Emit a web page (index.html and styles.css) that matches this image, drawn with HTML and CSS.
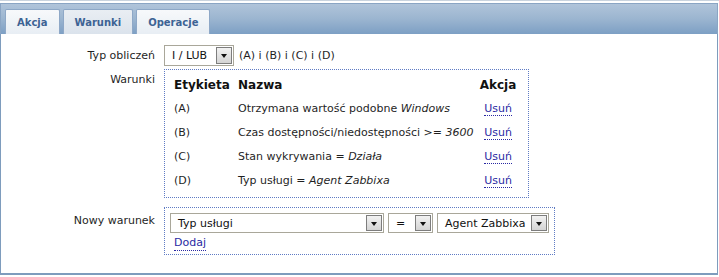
FILE: index.html
```html
<!DOCTYPE html>
<html lang="pl">
<head>
    <meta charset="UTF-8">
    <meta name="viewport" content="width=device-width, initial-scale=1.0">
    <title>Akcja - Warunki</title>
    <link rel="stylesheet" href="styles.css">
</head>
<body>
    <div class="tab-panel">
        <div class="tab-bar">
            <div class="tab">Akcja</div>
            <div class="tab active">Warunki</div>
            <div class="tab">Operacje</div>
        </div>
        <div class="tab-body">
            <div class="form-grid">
                <div class="form-label">Typ obliczeń</div>
                <div class="form-field inline">
                    <div class="select w-calc">
                        <span class="select-text">I / LUB</span>
                        <span class="select-btn"></span>
                    </div>
                    <span class="formula">(A) i (B) i (C) i (D)</span>
                </div>

                <div class="form-label top">Warunki</div>
                <div class="form-field">
                    <div class="dotted-box conditions">
                        <table class="cond-table">
                            <thead>
                                <tr>
                                    <th class="col-label">Etykieta</th>
                                    <th>Nazwa</th>
                                    <th class="col-action">Akcja</th>
                                </tr>
                            </thead>
                            <tbody>
                                <tr>
                                    <td>(A)</td>
                                    <td>Otrzymana wartość podobne <em>Windows</em></td>
                                    <td class="col-action"><a href="#" class="link">Usuń</a></td>
                                </tr>
                                <tr>
                                    <td>(B)</td>
                                    <td>Czas dostępności/niedostępności &gt;= <em>3600</em></td>
                                    <td class="col-action"><a href="#" class="link">Usuń</a></td>
                                </tr>
                                <tr>
                                    <td>(C)</td>
                                    <td>Stan wykrywania = <em>Działa</em></td>
                                    <td class="col-action"><a href="#" class="link">Usuń</a></td>
                                </tr>
                                <tr>
                                    <td>(D)</td>
                                    <td>Typ usługi = <em>Agent Zabbixa</em></td>
                                    <td class="col-action"><a href="#" class="link">Usuń</a></td>
                                </tr>
                            </tbody>
                        </table>
                    </div>
                </div>

                <div class="form-label top new">Nowy warunek</div>
                <div class="form-field">
                    <div class="dotted-box new-cond">
                        <div class="select-row">
                            <div class="select w-type">
                                <span class="select-text">Typ usługi</span>
                                <span class="select-btn"></span>
                            </div>
                            <div class="select w-op">
                                <span class="select-text">=</span>
                                <span class="select-btn"></span>
                            </div>
                            <div class="select w-value">
                                <span class="select-text">Agent Zabbixa</span>
                                <span class="select-btn"></span>
                            </div>
                        </div>
                        <a href="#" class="link add-link">Dodaj</a>
                    </div>
                </div>
            </div>
        </div>
    </div>
</body>
</html>
```

FILE: styles.css
```css
* {
    margin: 0;
    padding: 0;
    box-sizing: border-box;
}

body {
    font-family: 'DejaVu Sans', Verdana, sans-serif;
    font-size: 11px;
    color: #1f1f1f;
    background: #fff;
}

.tab-panel {
    width: 719px;
    height: 275px;
    border-top: 1px solid #c9d3de;
    padding-top: 2px;
}

.tab-bar {
    height: 31px;
    display: flex;
    align-items: flex-end;
    gap: 3px;
    padding-left: 4px;
    margin-right: 1px;
    background: linear-gradient(to bottom, #b0c4da 0%, #9bb5d0 50%, #7d9fc4 100%);
    border: 1px solid #8aa5c4;
    border-bottom: none;
}

.tab {
    height: 25px;
    padding: 0 11px;
    display: flex;
    align-items: center;
    font-weight: bold;
    font-size: 10px;
    color: #3d6394;
    background: linear-gradient(to bottom, #f7f9fb 0%, #e8eef4 100%);
    border: 1px solid #8ea8c7;
    border-bottom: none;
    border-radius: 2px 2px 0 0;
}

.tab.active {
    background: linear-gradient(to bottom, #e9eef3 0%, #dbe3ec 100%);
}

.tab-body {
    height: 241px;
    border: 1px solid #7e9cbd;
    border-top: none;
    border-bottom-width: 2px;
    margin-right: 1px;
    padding-top: 11px;
}

.form-grid {
    display: grid;
    grid-template-columns: 154px auto;
    column-gap: 9px;
    row-gap: 3px;
    align-items: center;
}

.form-label {
    text-align: right;
    color: #1f1f1f;
}

.form-label.top {
    align-self: start;
    padding-top: 4px;
}

.form-label.new {
    margin-top: 6px;
    padding-top: 7px;
}

.form-field.inline {
    display: flex;
    align-items: center;
    gap: 5px;
}

.formula {
    color: #1f1f1f;
}

/* selecty w stylu XP */
.select {
    height: 21px;
    display: flex;
    align-items: center;
    justify-content: space-between;
    border: 1px solid #a9a79a;
    background: #fff;
    padding: 1px 1px 1px 7px;
    color: #111;
    font-size: 11px;
}

.select-text {
    white-space: nowrap;
}

.select-btn {
    width: 16px;
    height: 17px;
    position: relative;
    border: 1px solid #7d7d7d;
    background: linear-gradient(to bottom, #f2f2f2 0%, #d4d4d4 100%);
}

.select-btn::after {
    content: '';
    position: absolute;
    left: 4px;
    top: 6px;
    border-left: 3px solid transparent;
    border-right: 3px solid transparent;
    border-top: 4px solid #111;
}

.w-calc { width: 70px; }
.w-type { width: 214px; }
.w-op { width: 45px; }
.w-value { width: 112px; }

.select-row .select {
    height: 20px;
}

.select-row .select-btn {
    height: 16px;
}

.dotted-box {
    border: 1px dotted #5f7bc4;
}

.conditions {
    width: 365px;
    padding: 4px 9px 5px 9px;
}

.cond-table {
    width: 100%;
    border-collapse: collapse;
}

.cond-table th {
    text-align: left;
    font-weight: bold;
    font-size: 12px;
    color: #111;
    height: 22px;
}

.cond-table td {
    height: 24px;
    color: #1f1f1f;
}

.cond-table .col-label {
    width: 64px;
}

.cond-table .col-action {
    width: 42px;
    text-align: center;
}

.link {
    color: #2a2aa3;
    text-decoration: none;
    border-bottom: 1px dotted #2a2aa3;
}

.new-cond {
    width: 391px;
    margin-top: 6px;
    padding: 5px 5px 3px 5px;
}

.select-row {
    display: flex;
    gap: 4px;
}

.add-link {
    display: inline-block;
    margin-top: 2px;
    margin-left: 4px;
    line-height: 15px;
}
```
